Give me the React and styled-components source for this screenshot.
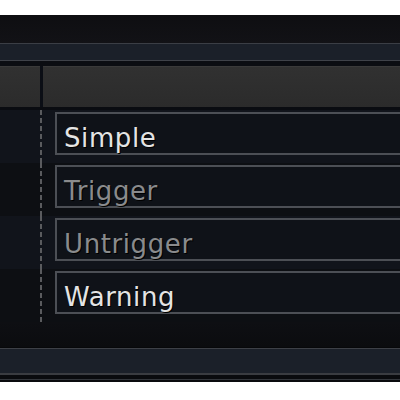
import React from 'react';
import styled, { createGlobalStyle } from 'styled-components';

const Global = createGlobalStyle`
  html, body {
    margin: 0;
    padding: 0;
    background: #ffffff;
  }
  body {
    font-family: "DejaVu Sans", "Liberation Sans", sans-serif;
  }
`;

const Page = styled.div`
  padding-top: 15px;
  width: 400px;
`;

const Panel = styled.div`
  display: flex;
  flex-direction: column;
  width: 400px;
  overflow: hidden;
  background: #0c0d11;
`;

const TitleBar = styled.div`
  height: 28px;
  background: linear-gradient(#0e0e11, #121216);
  border-bottom: 1px solid #3b3e45;
`;

const ToolBand = styled.div`
  height: ${p => p.h}px;
  background: #1b2029;
  border-bottom: 1px solid #3f4249;
`;

const Gap = styled.div`
  height: ${p => p.h}px;
  background: ${p => p.bg || '#0b0d12'};
`;

const HeaderRow = styled.div`
  display: grid;
  grid-template-columns: 40px 1fr;
  column-gap: 3px;
  height: 41px;
  background: #0b0e15;
`;

const HeaderCell = styled.div`
  background: linear-gradient(#313131, #2b2b2b);
  border-top: 1px solid #3a3a3a;
`;

const Rows = styled.div`
  display: flex;
  flex-direction: column;
`;

const Row = styled.div`
  display: grid;
  grid-template-columns: 40px 3px 1fr;
  height: 53px;
  background: ${p => (p.alt ? '#0d0f13' : '#11141b')};
`;

const Divider = styled.div`
  width: 2px;
  background: repeating-linear-gradient(
    to bottom,
    #5a5b5e 0px,
    #5a5b5e 5px,
    transparent 5px,
    transparent 8px
  );
`;

const Cell = styled.div`
  padding: 2px 0 0 12px;
`;

const Field = styled.div`
  box-sizing: border-box;
  height: 43px;
  padding: 9px 0 0 7px;
  border: 2px solid #4c4f55;
  border-right: none;
  background: #0f1218;
  font-size: 26px;
  line-height: 30px;
  letter-spacing: 0.6px;
  color: ${p => (p.dim ? '#8a8b8d' : '#e4e4e4')};
  text-shadow: 1px 1px 0 #000;
  white-space: nowrap;
`;

const Filler = styled.div`
  height: 25px;
  background: linear-gradient(#0e0f13, #0b0c0f);
  border-bottom: 1px solid #07080a;
`;

const FootBand = styled.div`
  height: 24px;
  background: #1b2029;
  border-top: 1px solid #3d4047;
  border-bottom: 2px solid #3a3c41;
`;

const FootEdge = styled.div`
  height: 4px;
  background: #0a0b0e;
  border-bottom: 1px solid #33363b;
  box-shadow: 0 2px 0 #0a0b0e;
  margin-bottom: 2px;
`;

const items = [
  { label: 'Simple' },
  { label: 'Trigger', dim: true },
  { label: 'Untrigger', dim: true },
  { label: 'Warning' },
];

export default function App() {
  return (
    <Page>
      <Global />
      <Panel>
        <TitleBar />
        <ToolBand h={16} />
        <Gap h={5} />
        <HeaderRow>
          <HeaderCell />
          <HeaderCell />
        </HeaderRow>
        <Gap h={3} bg="#0a0c11" />
        <Rows>
          {items.map((it, i) => (
            <Row key={it.label} alt={i % 2 === 1}>
              <div />
              <Divider />
              <Cell>
                <Field dim={it.dim}>{it.label}</Field>
              </Cell>
            </Row>
          ))}
        </Rows>
        <Filler />
        <FootBand />
        <FootEdge />
      </Panel>
    </Page>
  );
}
